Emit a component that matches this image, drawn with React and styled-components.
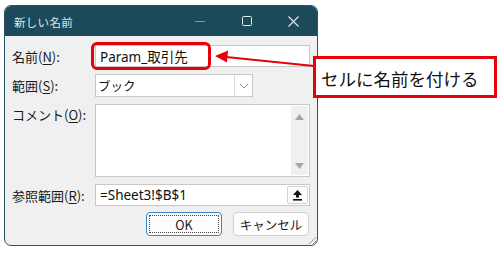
import styled, { createGlobalStyle } from 'styled-components'

const GlobalStyle = createGlobalStyle`
    html, body {
        margin: 0;
        padding: 0;
        background: #ffffff;
    }
    body {
        font-family: "Noto Sans CJK JP", "Noto Sans", sans-serif;
    }
`

const RED = '#e8000b'

function UploadIcon() {
    return (
        <svg width="11" height="12" viewBox="0 0 11 12">
            <path d="M5.5 1 L10 6 L7 6 L7 8.5 L4 8.5 L4 6 L1 6 Z" fill="#111" />
            <rect x="1" y="10" width="9" height="1.6" fill="#111" />
        </svg>
    )
}

function Chevron() {
    return (
        <svg width="10" height="6" viewBox="0 0 10 6">
            <path d="M1 1 L5 5 L9 1" fill="none" stroke="#8a8a8a" strokeWidth="1" />
        </svg>
    )
}

function Triangle({ down }) {
    return (
        <svg width="9" height="6" viewBox="0 0 9 6">
            <path d={down ? 'M0 0 L9 0 L4.5 6 Z' : 'M0 6 L9 6 L4.5 0 Z'} fill="#a6a6a6" />
        </svg>
    )
}

function Label({ text, accel, top }) {
    return (
        <LabelText $top={top}>
            {text}(<u>{accel}</u>):
        </LabelText>
    )
}

export default function App() {
    return (
        <Page>
            <GlobalStyle />
            <Dialog>
                <TitleBar>
                    <Title>新しい名前</Title>
                    <Controls>
                        <CtrlMin>
                            <svg width="10" height="2" viewBox="0 0 10 2">
                                <rect width="10" height="1" fill="#7f9aa3" />
                            </svg>
                        </CtrlMin>
                        <Ctrl>
                            <svg width="10" height="10" viewBox="0 0 10 10">
                                <rect x="0.5" y="0.5" width="9" height="9" rx="1" fill="none" stroke="#e4ecee" />
                            </svg>
                        </Ctrl>
                        <Ctrl>
                            <svg width="11" height="11" viewBox="0 0 11 11">
                                <path d="M0.5 0.5 L10.5 10.5 M10.5 0.5 L0.5 10.5" stroke="#e4ecee" strokeWidth="1.1" />
                            </svg>
                        </Ctrl>
                    </Controls>
                </TitleBar>
                <Body>
                    <Form>
                        <Label text="名前" accel="N" />
                        <TextBox $h={22}>Param_取引先</TextBox>

                        <Label text="範囲" accel="S" />
                        <Combo>
                            <ComboText>ブック</ComboText>
                            <ComboButton>
                                <Chevron />
                            </ComboButton>
                        </Combo>

                        <Label text="コメント" accel="O" top />
                        <Memo>
                            <MemoArea />
                            <ScrollBar>
                                <Triangle />
                                <Triangle down />
                            </ScrollBar>
                        </Memo>

                        <Label text="参照範囲" accel="R" />
                        <TextBox $h={22}>
                            =Sheet3!$B$1
                            <PickButton>
                                <UploadIcon />
                            </PickButton>
                        </TextBox>
                    </Form>
                    <ButtonRow>
                        <Button $primary>
                            <FocusRect>OK</FocusRect>
                        </Button>
                        <Button>キャンセル</Button>
                    </ButtonRow>
                    <Grip>
                        <svg width="8" height="8" viewBox="0 0 8 8">
                            <path d="M8 1 L1 8 M8 5 L5 8" stroke="#9a9a9a" strokeWidth="1" />
                        </svg>
                    </Grip>
                </Body>
            </Dialog>

            <NameHighlight />
            <Arrow width="500" height="253" viewBox="0 0 500 253">
                <line x1="314" y1="66" x2="226" y2="57" stroke={RED} strokeWidth="2.2" />
                <path d="M215 56 L228 50.5 L227 62.5 Z" fill={RED} />
            </Arrow>
            <Callout>セルに名前を付ける</Callout>
        </Page>
    )
}

const Page = styled.div`
    position: relative;
    width: 500px;
    height: 253px;
    padding: 5px 0 0 4px;
    box-sizing: border-box;
    overflow: hidden;
`

const Dialog = styled.div`
    width: 314px;
    height: 241px;
    box-sizing: border-box;
    border: 1px solid #2b5566;
    border-radius: 7px;
    overflow: hidden;
    display: flex;
    flex-direction: column;
    background: #f0f0f0;
`

const TitleBar = styled.div`
    height: 30px;
    flex: none;
    background: #1c4a5a;
    display: flex;
    align-items: center;
    justify-content: space-between;
    padding-left: 9px;
`

const Title = styled.div`
    color: #dfe8ea;
    font-size: 11.5px;
    letter-spacing: 0.3px;
    margin-top: 1px;
`

const Controls = styled.div`
    display: flex;
    height: 100%;
`

const Ctrl = styled.div`
    width: 47px;
    display: flex;
    align-items: center;
    justify-content: center;
`

const CtrlMin = styled(Ctrl)`
    padding-top: 2px;
`

const Body = styled.div`
    position: relative;
    flex: 1;
    padding: 9px 7px 0 7px;
`

const Form = styled.div`
    display: grid;
    grid-template-columns: 83px 215px;
    grid-template-rows: 22px 23px 73px 22px;
    row-gap: 7px;
`

const LabelText = styled.div`
    font-size: 13px;
    color: #1a1a1a;
    display: flex;
    align-items: ${(p) => (p.$top ? 'flex-start' : 'center')};
    padding-top: ${(p) => (p.$top ? '1px' : '0')};
    white-space: nowrap;
    u {
        text-underline-offset: 2px;
    }
`

const TextBox = styled.div`
    position: relative;
    height: ${(p) => p.$h}px;
    box-sizing: border-box;
    border: 1px solid #c8c8c8;
    background: #ffffff;
    font-family: "Noto Sans", "Noto Sans CJK JP", sans-serif;
    font-size: 13.5px;
    color: #111;
    display: flex;
    align-items: center;
    padding-left: 4px;
`

const PickButton = styled.div`
    position: absolute;
    right: 1px;
    top: 1px;
    bottom: 1px;
    width: 21px;
    background: #fbfbfb;
    border: 1px solid #d4d4d4;
    border-radius: 2px;
    box-sizing: border-box;
    display: flex;
    align-items: center;
    justify-content: center;
`

const Combo = styled.div`
    width: 158px;
    height: 23px;
    box-sizing: border-box;
    border: 1px solid #c8c8c8;
    background: #ffffff;
    display: flex;
`

const ComboText = styled.div`
    flex: 1;
    font-size: 12.5px;
    color: #111;
    display: flex;
    align-items: center;
    padding-left: 2px;
`

const ComboButton = styled.div`
    width: 17px;
    border-left: 1px solid #dcdcdc;
    display: flex;
    align-items: center;
    justify-content: center;
`

const Memo = styled.div`
    box-sizing: border-box;
    border: 1px solid #c8c8c8;
    background: #ffffff;
    display: flex;
    padding: 1px;
`

const MemoArea = styled.div`
    flex: 1;
`

const ScrollBar = styled.div`
    width: 17px;
    background: #f0f0f0;
    display: flex;
    flex-direction: column;
    justify-content: space-between;
    align-items: center;
    padding: 8px 0 6px;
`

const ButtonRow = styled.div`
    display: flex;
    justify-content: flex-end;
    gap: 11px;
    margin-top: 6px;
    padding-right: 1px;
`

const Button = styled.div`
    width: 76px;
    height: 24px;
    box-sizing: border-box;
    border: 1px solid ${(p) => (p.$primary ? '#3a86c8' : '#d0d0d0')};
    border-radius: 4px;
    background: #fdfdfd;
    font-size: 12.5px;
    color: #1a1a1a;
    display: flex;
    align-items: center;
    justify-content: center;
    padding: 2px;
`

const FocusRect = styled.div`
    width: 100%;
    height: 100%;
    box-sizing: border-box;
    border: 1px dotted #444;
    display: flex;
    align-items: center;
    justify-content: center;
`

const Grip = styled.div`
    position: absolute;
    right: 1px;
    bottom: 1px;
    display: flex;
`

const NameHighlight = styled.div`
    position: absolute;
    left: 91px;
    top: 42px;
    width: 120px;
    height: 28px;
    box-sizing: border-box;
    border: 3px solid ${RED};
    border-radius: 6px;
`

const Arrow = styled.svg`
    position: absolute;
    left: 0;
    top: 0;
    pointer-events: none;
`

const Callout = styled.div`
    position: absolute;
    left: 313px;
    top: 56px;
    width: 184px;
    height: 42px;
    box-sizing: border-box;
    border: 3px solid ${RED};
    background: #ffffff;
    font-size: 17.5px;
    color: #111;
    display: flex;
    align-items: center;
    padding-left: 5px;
    padding-top: 2px;
`
